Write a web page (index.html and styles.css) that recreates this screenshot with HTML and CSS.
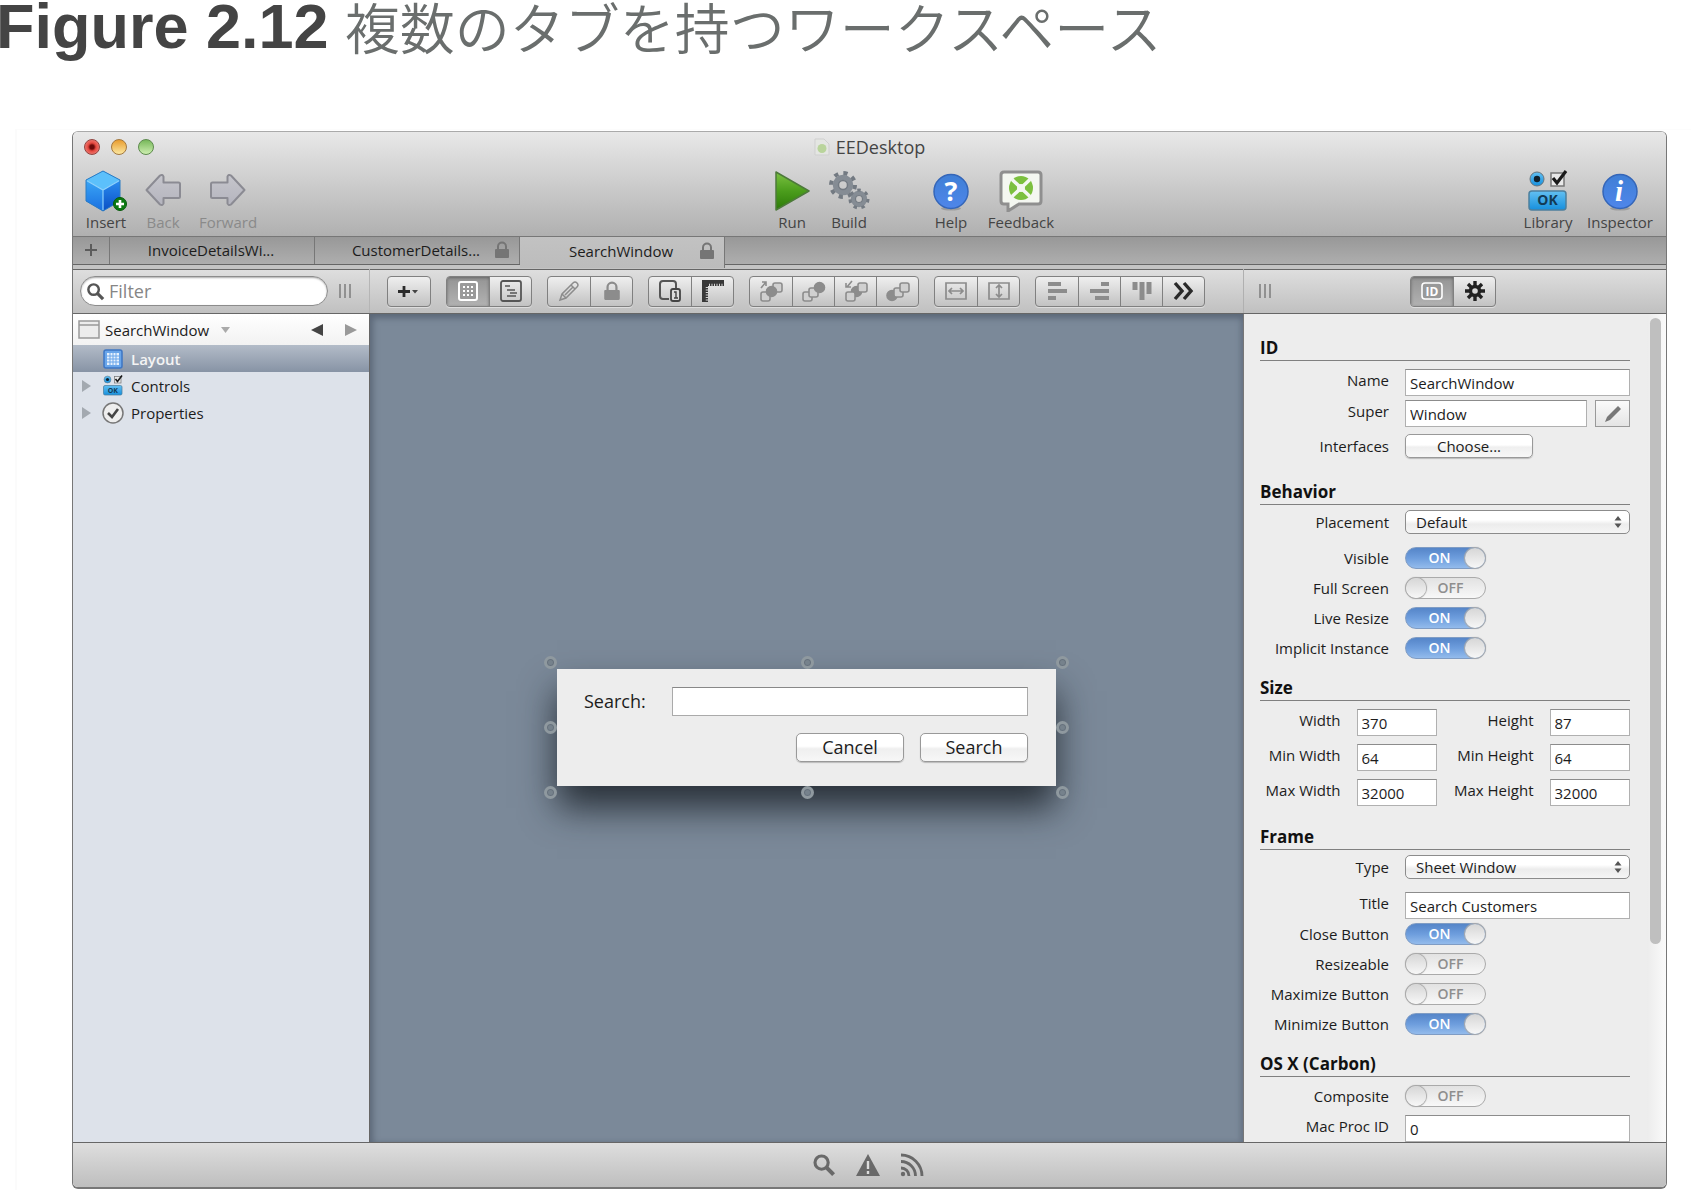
FILE: index.html
```html
<!DOCTYPE html>
<html lang="ja">
<head>
<meta charset="utf-8">
<meta name="viewport" content="width=device-width, initial-scale=1">
<title>Figure 2.12 複数のタブを持つワークスペース</title>
<link rel="stylesheet" href="styles.css">
</head>
<body>
<svg class="defs" width="0" height="0" aria-hidden="true">
  <defs>
    <linearGradient id="g-green" x1="0" y1="0" x2="0" y2="1"><stop offset="0" stop-color="#7cc242"/><stop offset=".5" stop-color="#4b9d1c"/><stop offset="1" stop-color="#2c7a08"/></linearGradient>
    <linearGradient id="g-blue" x1="0" y1="0" x2="0" y2="1"><stop offset="0" stop-color="#3f7fd6"/><stop offset="1" stop-color="#4f86ea"/></linearGradient>
    <linearGradient id="g-cyan" x1="0" y1="0" x2="0" y2="1"><stop offset="0" stop-color="#63c0f2"/><stop offset="1" stop-color="#168fdd"/></linearGradient>
    <linearGradient id="g-left" x1="0" y1="0" x2="0" y2="1"><stop offset="0" stop-color="#3aa6f6"/><stop offset="1" stop-color="#1a6fe0"/></linearGradient>
    <linearGradient id="g-right" x1="0" y1="0" x2="0" y2="1"><stop offset="0" stop-color="#2b8df0"/><stop offset="1" stop-color="#0a4fc4"/></linearGradient>
    <linearGradient id="g-arrow" x1="0" y1="0" x2="0" y2="1"><stop offset="0" stop-color="#c6c6cc"/><stop offset="1" stop-color="#b4b4be"/></linearGradient>
  </defs>
  <symbol id="lock" viewBox="0 0 16 18"><path d="M4 8V5.500a4 4 0 0 1 8 0V8" fill="none" stroke="currentColor" stroke-width="2"/><rect x="1" y="8" width="14" height="9" rx="1" fill="currentColor"/></symbol>
  <symbol id="lens" viewBox="0 0 20 20"><circle cx="8" cy="8" r="5.500" fill="none" stroke="currentColor" stroke-width="2.600"/><path d="M12 12l6 6" stroke="currentColor" stroke-width="3.400"/></symbol>
  <symbol id="controls" viewBox="0 0 40 42">
    <circle cx="9" cy="9" r="7" fill="url(#g-cyan)" stroke="#68747c"/><circle cx="9" cy="9" r="3.200" fill="#10202c"/>
    <rect x="23" y="3" width="13" height="13" fill="#e9e9e9" stroke="#777" stroke-width="1.500"/><path d="M25 8l4 5 9-12" fill="none" stroke="#191919" stroke-width="3.200"/>
    <rect x="1" y="21" width="37" height="19" rx="3" fill="url(#g-cyan)" stroke="#4d7f9d" stroke-width="1.500"/>
  </symbol>
</svg>

<h1 class="caption"><strong>Figure 2.12</strong><span>複数のタブを持つワークスペース</span></h1>

<main class="figure">
<div class="window">
  <header class="chrome">
    <div class="titlebar">
      <div class="lights">
        <button class="light light-close" aria-label="Close"></button>
        <button class="light light-min" aria-label="Minimize"></button>
        <button class="light light-zoom" aria-label="Zoom"></button>
      </div>
      <div class="title">
        <svg width="16" height="18" viewBox="0 0 16 18"><path d="M1 1h9l5 5v11H1z" fill="#e4e6e2" stroke="#cfcfcf"/><circle cx="8" cy="10.500" r="4.500" fill="#b9d49b"/></svg>
        <span>EEDesktop</span>
      </div>
    </div>
    <div class="tools">
      <button class="tool w42">
        <svg width="42" height="42" viewBox="0 0 42 42"><path d="M18 1L35 10V31L18 41L1 31V10z" fill="#1b6fd8"/><path d="M18 1L35 10L18 20L1 10z" fill="#5cc0fb"/><path d="M1 10L18 20V41L1 31z" fill="url(#g-left)"/><path d="M35 10L18 20V41L35 31z" fill="url(#g-right)"/><path d="M1.500 10.500L18 20L34.500 10.500M18 20V40" fill="none" stroke="#8fd2fb" stroke-width="1.200"/><path d="M18 1L35 10V31L18 41L1 31V10z" fill="none" stroke="#2b7cc4"/><circle cx="35" cy="34" r="6.500" fill="#0c7a12" stroke="#075a0b"/><path d="M35 30v8M31 34h8" stroke="#fff" stroke-width="2.600"/></svg>
        <span>Insert</span>
      </button>
      <button class="tool w36" disabled>
        <svg width="36" height="42" viewBox="0 0 36 42"><path d="M1.500 20L15 5.500Q17.500 4 18.500 6.500V12.500H33.500Q35 12.500 35 14V26.500Q35 28 33.500 28H18.500V33.500Q17.500 36 15 34.500z" fill="url(#g-arrow)" stroke="#8b8b93" stroke-width="2" stroke-linejoin="round"/></svg>
        <span>Back</span>
      </button>
      <button class="tool w58" disabled>
        <svg width="36" height="42" viewBox="0 0 36 42"><path d="M34.500 20L21 5.500Q18.500 4 17.500 6.500V12.500H2.500Q1 12.500 1 14V26.500Q1 28 2.500 28H17.500V33.500Q18.500 36 21 34.500z" fill="url(#g-arrow)" stroke="#8b8b93" stroke-width="2" stroke-linejoin="round"/></svg>
        <span>Forward</span>
      </button>
      <div class="spacer-a"></div>
      <button class="tool w36">
        <svg width="36" height="42" viewBox="0 0 36 42"><path d="M2 2L35 21L2 40z" fill="url(#g-green)" stroke="#4d7a3a" stroke-width="1.500" stroke-linejoin="round"/></svg>
        <span>Run</span>
      </button>
      <button class="tool w42">
        <svg width="42" height="42" viewBox="0 0 42 42"><g fill="none" stroke="#737a82"><circle cx="15" cy="15" r="7.500" stroke-width="5.500" stroke="#858c94"/><circle cx="15" cy="15" r="12" stroke-width="4" stroke-dasharray="4.200 5.225"/><circle cx="15" cy="15" r="4.500" stroke-width="1.500"/><circle cx="31" cy="29" r="6" stroke-width="4.500" stroke="#858c94"/><circle cx="31" cy="29" r="9" stroke-width="3" stroke-dasharray="3.500 4.578"/><circle cx="31" cy="29" r="3.500" stroke-width="1.200"/></g></svg>
        <span>Build</span>
      </button>
      <div class="spacer-gap"></div>
      <button class="tool w36">
        <svg width="36" height="42" viewBox="0 0 36 42"><ellipse cx="18" cy="38.500" rx="10" ry="2" fill="#9d9d9d"/><circle cx="18" cy="21.500" r="17" fill="url(#g-blue)" stroke="#3566b8" stroke-width="1.500"/><text x="18" y="31" text-anchor="middle" class="glyph-help">?</text></svg>
        <span>Help</span>
      </button>
      <button class="tool w68">
        <svg width="44" height="42" viewBox="0 0 44 42"><path d="M5 2H39Q42 2 42 5V31Q42 34 39 34H20L9 41V34H5Q2 34 2 31V5Q2 2 5 2z" fill="#f4f7f1" stroke="#8f8f8f" stroke-width="3"/><circle cx="22" cy="18" r="12" fill="#7cc03f"/><path d="M13 9.500L31 26.500M31 9.500L13 26.500" stroke="#f4f7f1" stroke-width="3.500"/><circle cx="22" cy="18" r="4" fill="#f4f7f1"/></svg>
        <span>Feedback</span>
      </button>
      <div class="spacer-b"></div>
      <div class="tool-pair">
      <button class="tool w50">
        <svg width="40" height="42" viewBox="0 0 40 42"><use href="#controls" width="40" height="42"/><text x="19.500" y="35" text-anchor="middle" class="ok-text">OK</text></svg>
        <span>Library</span>
      </button>
      <button class="tool w66">
        <svg width="36" height="42" viewBox="0 0 36 42"><ellipse cx="18" cy="38.500" rx="10" ry="2" fill="#9d9d9d"/><circle cx="18" cy="21.500" r="17" fill="url(#g-blue)" stroke="#3566b8" stroke-width="1.500"/><text x="17" y="31" text-anchor="middle" class="glyph-info">i</text></svg>
        <span>Inspector</span>
      </button>
      </div>
    </div>
  </header>

  <nav class="tabs" aria-label="Tabs">
    <button class="tab-add" aria-label="New tab"><svg width="12" height="12" viewBox="0 0 12 12"><path d="M6 0v12M0 6h12" stroke="#5c5c5c" stroke-width="2"/></svg></button>
    <button class="tab"><span>InvoiceDetailsWi...</span></button>
    <button class="tab"><span>CustomerDetails...</span><svg class="tab-lock" width="16" height="18"><use href="#lock"/></svg></button>
    <button class="tab tab-active"><span>SearchWindow</span><svg class="tab-lock" width="16" height="18"><use href="#lock"/></svg></button>
  </nav>

  <div class="bar">
    <div class="bar-side">
      <label class="filter"><svg width="19" height="19"><use href="#lens"/></svg><input type="search" placeholder="Filter" aria-label="Filter"></label>
      <svg class="grip" width="12" height="14" viewBox="0 0 12 14"><path d="M1 0v14M6 0v14M11 0v14" stroke="#777" stroke-width="1.400"/></svg>
    </div>
    <div class="bar-main">
      <div class="seg"><button aria-label="Add"><svg width="24" height="20" viewBox="0 0 24 20"><path d="M7 5v11M1 10.500h12" stroke="#2c2c2c" stroke-width="2.800"/><path d="M15 9h6l-3 3.500z" fill="#444"/></svg></button></div>
      <div class="seg">
        <button class="pressed" aria-label="Layout"><svg width="22" height="22" viewBox="0 0 22 22"><rect x="2" y="2" width="18" height="18" rx="2" fill="#9a9a9a" stroke="#fff" stroke-width="2"/><g fill="none" stroke="#fff" stroke-width="2" stroke-dasharray="2 2"><path d="M6 7h10M6 11h10M6 15h10"/></g></svg></button>
        <button aria-label="Code"><svg width="22" height="22" viewBox="0 0 22 22"><rect x="1" y="1" width="20" height="20" rx="2" fill="none" stroke="#555" stroke-width="1.800"/><path d="M5 6h5M7 10h8M10 13h7M7 16h9" stroke="#555" stroke-width="1.600"/></svg></button>
      </div>
      <div class="seg muted">
        <button aria-label="Edit"><svg width="22" height="22" viewBox="0 0 22 22"><path d="M2 20L4 14L15 3Q17 1 19 3Q21 5 19 7L8 18zM4 14l4 4M13 5l4 4M7 15l8-8" fill="none" stroke="currentColor" stroke-width="1.500"/></svg></button>
        <button aria-label="Lock"><svg width="18" height="20"><use href="#lock"/></svg></button>
      </div>
      <div class="seg">
        <button aria-label="Tab order"><svg width="24" height="22" viewBox="0 0 24 22"><path d="M11 19H5Q2 19 2 16V4Q2 1 5 1H15Q18 1 18 4V8" fill="none" stroke="#555" stroke-width="2"/><rect x="13" y="9" width="9" height="12" rx="2" fill="#ddd" stroke="#444" stroke-width="1.800"/><path d="M16 12h2v6M16 18h4" fill="none" stroke="#444" stroke-width="1.400"/></svg></button>
        <button aria-label="Rulers"><svg width="22" height="22" viewBox="0 0 22 22"><path d="M0 0H22V6H6V22H0z" fill="#383838"/><path d="M7 5h15M5 7v15" stroke="#d5d5d5" stroke-width="2.500" stroke-dasharray="1 1.500"/></svg></button>
      </div>
      <div class="seg muted">
        <button aria-label="Bring to front"><svg width="24" height="22" viewBox="0 0 24 22"><g fill="#d0d0d0" stroke="currentColor" stroke-width="1.600"><rect x="2" y="12" width="9" height="9" rx="2"/><rect x="14" y="3" width="9" height="9" rx="2"/><circle cx="12.500" cy="11.500" r="5" fill="currentColor"/><path d="M2 8l5-6M3 2h4v4" fill="none"/></g></svg></button>
        <button aria-label="Bring forward"><svg width="24" height="22" viewBox="0 0 24 22"><g fill="#d0d0d0" stroke="currentColor" stroke-width="1.600"><rect x="1" y="12" width="9" height="9" rx="2"/><rect x="7" y="8" width="9" height="9" rx="2"/><circle cx="17.500" cy="7.500" r="5" fill="currentColor"/></g></svg></button>
        <button aria-label="Send to back"><svg width="24" height="22" viewBox="0 0 24 22"><g fill="#d0d0d0" stroke="currentColor" stroke-width="1.600"><circle cx="12.500" cy="11.500" r="5" fill="currentColor"/><rect x="2" y="12" width="9" height="9" rx="2"/><rect x="14" y="3" width="9" height="9" rx="2"/><path d="M8 1l-5 6M2 3v4h5" fill="none"/></g></svg></button>
        <button aria-label="Send backward"><svg width="24" height="22" viewBox="0 0 24 22"><g fill="#d0d0d0" stroke="currentColor" stroke-width="1.600"><circle cx="6" cy="15.500" r="5" fill="currentColor"/><rect x="8" y="8" width="9" height="9" rx="2"/><rect x="14" y="3" width="9" height="9" rx="2"/></g></svg></button>
      </div>
      <div class="seg muted">
        <button aria-label="Fill width"><svg width="22" height="18" viewBox="0 0 22 18"><path d="M1 1h20v16H1zM4 9h14M7 6L4 9l3 3M15 6l3 3-3 3" fill="none" stroke="currentColor" stroke-width="1.700"/></svg></button>
        <button aria-label="Fill height"><svg width="22" height="18" viewBox="0 0 22 18"><path d="M1 1h20v16H1zM11 3v12M8 6l3-3 3 3M8 12l3 3 3-3" fill="none" stroke="currentColor" stroke-width="1.700"/></svg></button>
      </div>
      <div class="seg muted">
        <button aria-label="Align left"><svg width="20" height="20" viewBox="0 0 20 20"><path d="M1 3h13M1 10h19M1 17h8" stroke="currentColor" stroke-width="4"/></svg></button>
        <button aria-label="Align right"><svg width="20" height="20" viewBox="0 0 20 20"><path d="M11 3h8M0 10h19M5 17h14" stroke="currentColor" stroke-width="4"/></svg></button>
        <button aria-label="Align top"><svg width="20" height="20" viewBox="0 0 20 20"><path d="M3 1v8M10 1v18M17 1v12" stroke="currentColor" stroke-width="5"/></svg></button>
        <button aria-label="More"><svg width="22" height="20" viewBox="0 0 22 20"><path d="M2 2l7 8-7 8M11 2l7 8-7 8" fill="none" stroke="#2a2a2a" stroke-width="3.400"/></svg></button>
      </div>
    </div>
    <div class="bar-inspector">
      <svg class="grip" width="12" height="14" viewBox="0 0 12 14"><path d="M1 0v14M6 0v14M11 0v14" stroke="#777" stroke-width="1.400"/></svg>
      <div class="seg">
        <button class="pressed" aria-label="ID"><svg width="24" height="18" viewBox="0 0 24 18"><rect x="2" y="1" width="20" height="16" rx="3" fill="#999" stroke="#fff" stroke-width="1.600"/><text x="12" y="14" text-anchor="middle" class="id-text">ID</text></svg></button>
        <button aria-label="Settings"><svg width="22" height="22" viewBox="0 0 22 22"><g stroke="#222" stroke-width="3.400"><path d="M11 1v6M11 15v6M1 11h6M15 11h6M4 4l4 4M14 14l4 4M18 4l-4 4M8 14l-4 4"/><circle cx="11" cy="11" r="4.500" fill="none"/></g></svg></button>
      </div>
      <span></span>
    </div>
  </div>

  <div class="work">
    <aside class="sidebar">
      <div class="crumb">
        <svg width="22" height="20" viewBox="0 0 22 20"><rect x="1" y="1" width="20" height="17" fill="#ececec" stroke="#999" stroke-width="1.500"/><path d="M1 5h20" stroke="#999" stroke-width="1.500"/></svg>
        <button class="crumb-name">SearchWindow <svg width="9" height="6" viewBox="0 0 9 6"><path d="M0 0h9L4.500 6z" fill="#aaa"/></svg></button>
        <button class="step" aria-label="Previous"><svg width="12" height="12" viewBox="0 0 12 12"><path d="M12 0v12L0 6z" fill="#444"/></svg></button>
        <button class="step" aria-label="Next"><svg width="12" height="12" viewBox="0 0 12 12"><path d="M0 0v12L12 6z" fill="#999"/></svg></button>
      </div>
      <ul class="tree">
        <li class="selected"><span class="twist"></span><span class="node"><svg width="20" height="20" viewBox="0 0 20 20"><rect x="1" y="1" width="18" height="18" rx="2" fill="#6aa6ea" stroke="#3d76c4" stroke-width="1.500"/><rect x="4" y="4" width="12" height="12" fill="#e8f2fd"/><path d="M7 4v12M10 4v12M13 4v12M4 7h12M4 10h12M4 13h12" stroke="#6aa6ea"/></svg></span>Layout</li>
        <li><span class="twist"><svg width="9" height="12" viewBox="0 0 9 12"><path d="M0 0v12l9-6z" fill="#a3a9b0"/></svg></span><span class="node"><svg width="20" height="21" viewBox="0 0 40 42"><use href="#controls" width="40" height="42"/><text x="19.500" y="35" text-anchor="middle" class="ok-text">OK</text></svg></span>Controls</li>
        <li><span class="twist"><svg width="9" height="12" viewBox="0 0 9 12"><path d="M0 0v12l9-6z" fill="#a3a9b0"/></svg></span><span class="node"><svg width="22" height="22" viewBox="0 0 22 22"><circle cx="11" cy="11" r="10" fill="#eee" stroke="#777" stroke-width="1.500"/><path d="M6 11l4 4 6-8" fill="none" stroke="#444" stroke-width="2.600"/></svg></span>Properties</li>
      </ul>
    </aside>

    <section class="canvas">
      <form class="dialog">
        <label for="query">Search:</label>
        <input id="query" type="text">
        <div class="dialog-buttons">
          <button type="button" class="push">Cancel</button>
          <button type="button" class="push">Search</button>
        </div>
        <i class="handle top left"></i><i class="handle top mid"></i><i class="handle top right"></i>
        <i class="handle center left"></i><i class="handle center right"></i>
        <i class="handle bottom left"></i><i class="handle bottom mid"></i><i class="handle bottom right"></i>
      </form>
    </section>

    <aside class="inspector">
      <div class="props">
        <section class="group">
          <h2>ID</h2>
          <div class="row row-text"><label for="name">Name</label><input id="name" type="text" value="SearchWindow"></div>
          <div class="row row-text"><label for="super">Super</label><div class="pair"><input id="super" type="text" value="Window"><button class="edit" aria-label="Edit super"><svg width="18" height="18" viewBox="0 0 18 18"><path d="M1 17l2-5L14 1l3 3L6 15z" fill="#777"/></svg></button></div></div>
          <div class="row row-push"><span id="interfaces">Interfaces</span><button class="push choose" aria-describedby="interfaces">Choose...</button></div>
        </section>
        <section class="group group-tight">
          <h2>Behavior</h2>
          <div class="row row-select"><label for="placement">Placement</label><div class="popup"><select id="placement"><option>Default</option></select><svg width="8" height="12" viewBox="0 0 8 12"><path d="M0.500 4.500h7L4 0zM0.500 7.500h7L4 12z" fill="#555"/></svg></div></div>
          <div class="row row-switch"><label for="visible">Visible</label><span class="switch"><input id="visible" type="checkbox" checked><span class="state">ON</span><i class="knob"></i></span></div>
          <div class="row row-switch"><label for="full">Full Screen</label><span class="switch off"><input id="full" type="checkbox"><span class="state">OFF</span><i class="knob"></i></span></div>
          <div class="row row-switch"><label for="live">Live Resize</label><span class="switch"><input id="live" type="checkbox" checked><span class="state">ON</span><i class="knob"></i></span></div>
          <div class="row row-switch"><label for="implicit">Implicit Instance</label><span class="switch"><input id="implicit" type="checkbox" checked><span class="state">ON</span><i class="knob"></i></span></div>
        </section>
        <section class="group">
          <h2>Size</h2>
          <div class="sizes">
            <label for="w">Width</label><input id="w" type="text" value="370">
            <label for="h">Height</label><input id="h" type="text" value="87">
            <label for="minw">Min Width</label><input id="minw" type="text" value="64">
            <label for="minh">Min Height</label><input id="minh" type="text" value="64">
            <label for="maxw">Max Width</label><input id="maxw" type="text" value="32000">
            <label for="maxh">Max Height</label><input id="maxh" type="text" value="32000">
          </div>
        </section>
        <section class="group group-tight">
          <h2>Frame</h2>
          <div class="row row-select"><label for="type">Type</label><div class="popup"><select id="type"><option>Sheet Window</option></select><svg width="8" height="12" viewBox="0 0 8 12"><path d="M0.500 4.500h7L4 0zM0.500 7.500h7L4 12z" fill="#555"/></svg></div></div>
          <div class="row row-text"><label for="title">Title</label><input id="title" type="text" value="Search Customers"></div>
          <div class="row row-switch"><label for="close">Close Button</label><span class="switch"><input id="close" type="checkbox" checked><span class="state">ON</span><i class="knob"></i></span></div>
          <div class="row row-switch"><label for="resize">Resizeable</label><span class="switch off"><input id="resize" type="checkbox"><span class="state">OFF</span><i class="knob"></i></span></div>
          <div class="row row-switch"><label for="max">Maximize Button</label><span class="switch off"><input id="max" type="checkbox"><span class="state">OFF</span><i class="knob"></i></span></div>
          <div class="row row-switch"><label for="min">Minimize Button</label><span class="switch"><input id="min" type="checkbox" checked><span class="state">ON</span><i class="knob"></i></span></div>
        </section>
        <section class="group">
          <h2>OS X (Carbon)</h2>
          <div class="row row-switch"><label for="composite">Composite</label><span class="switch off"><input id="composite" type="checkbox"><span class="state">OFF</span><i class="knob"></i></span></div>
          <div class="row row-text"><label for="proc">Mac Proc ID</label><input id="proc" type="text" value="0"></div>
        </section>
      </div>
      <div class="track"><div class="thumb"></div></div>
    </aside>
  </div>

  <footer class="status">
    <button aria-label="Find"><svg width="24" height="24"><use href="#lens"/></svg></button>
    <button aria-label="Errors"><svg width="26" height="24" viewBox="0 0 26 24"><path d="M13 1L25 23H1z" fill="#696969"/><path d="M13 8v8M13 18v3" stroke="#ddd" stroke-width="2.400"/></svg></button>
    <button aria-label="Messages"><svg width="24" height="24" viewBox="0 0 24 24"><g fill="none" stroke="#696969" stroke-width="2.800"><path d="M1 2A21 21 0 0 1 22 23M1 8.500A14.500 14.500 0 0 1 15.500 23M1 15A8 8 0 0 1 9 23"/></g><circle cx="3" cy="21" r="2.200" fill="#696969"/></svg></button>
  </footer>
</div>
</main>
</body>
</html>
```

FILE: styles.css
```css
* { box-sizing: border-box; }

body {
  margin: 0;
  height: 100vh;
  min-width: 1400px;
  display: flex;
  flex-direction: column;
  overflow: hidden;
  background: #fff;
  color: #1c1c1c;
  font: 15px/20px "Open Sans", "Noto Sans", "Noto Sans CJK JP", sans-serif;
}

button, input, select { font: inherit; color: inherit; margin: 0; }
button { padding: 0; border: 0; background: none; }
svg { display: block; flex: none; }
.defs { position: absolute; }

.caption {
  display: flex;
  align-items: flex-start;
  gap: 16px;
  margin: 0 0 0 -4px;
  height: 129px;
  color: #6a6e6d;
  font: 350 55px/50px "Noto Sans CJK JP", sans-serif;
  white-space: nowrap;
}
.caption strong {
  color: #444;
  font: 700 63px/52px "Liberation Sans", Arial, sans-serif;
}

.figure {
  flex: 1;
  min-height: 0;
  display: flex;
  margin-left: 15px;
  padding: 1px 24px 1px 55px;
  border-top: 1px solid #fcfcfc;
  border-left: 2px solid #fbfbfb;
}

.window {
  flex: 1;
  min-width: 0;
  display: flex;
  flex-direction: column;
  border: 1px solid #777;
  border-top-color: #aaa;
  border-bottom: 2px solid #777;
  border-radius: 6px;
  overflow: hidden;
}

/* Title bar and main tools */
.chrome {
  background: linear-gradient(#e8e8e8, #cfcfcf 45%, #b0b0b0);
  border-bottom: 1px solid #777;
  color: #444;
}
.titlebar {
  display: grid;
  grid-template-columns: 1fr auto 1fr;
  align-items: center;
  height: 34px;
  padding: 0 11px 4px;
}
.lights { display: flex; gap: 11px; }
.light { width: 16px; height: 16px; border-radius: 50%; border: 1px solid #777; }
.light-close { background: radial-gradient(circle, #6b0a0a 0 2px, #e5483f 4px, #f39c94); border-color: #92433f; }
.light-min { background: linear-gradient(#e99c2e, #fbe7a0); border-color: #a3783e; }
.light-zoom { background: linear-gradient(#77b85a, #cdeeb0); border-color: #5c8a4c; }
.title { display: flex; align-items: center; gap: 6px; font-size: 18px; }

.tools {
  display: flex;
  gap: 18px;
  height: 70px;
  padding: 4px 13px 0 12px;
}
.tool {
  display: flex;
  flex-direction: column;
  align-items: center;
  height: 62px;
  white-space: nowrap;
}
.tool:disabled { color: #8a8a8a; }
.tool-pair { display: flex; gap: 14px; }
.w36 { width: 36px; }
.w42 { width: 42px; }
.w50 { width: 50px; }
.w58 { width: 58px; }
.w66 { width: 66px; }
.w68 { width: 68px; }
.spacer-a { flex: 520; }
.spacer-gap { width: 27px; }
.spacer-b { flex: 467; }
.ok-text { font: 700 14px "Open Sans", sans-serif; fill: #123a55; }
.id-text { font: 700 12px "Open Sans", sans-serif; fill: #fff; }
.glyph-help { font: 700 27px "Open Sans", sans-serif; fill: #fff; }
.glyph-info { font: italic 700 29px "Liberation Serif", serif; fill: #fff; }

/* Document tabs */
.tabs {
  display: flex;
  height: 28px;
  background: linear-gradient(#989898, #aeaeae);
  border-bottom: 1px solid #666;
}
.tab-add, .tab { border-right: 1px solid #777; padding-bottom: 2px; }
.tab-add { width: 37px; display: grid; place-items: center; }
.tab {
  width: 205px;
  display: grid;
  grid-template-columns: 30px 1fr 32px;
  align-items: center;
  white-space: nowrap;
}
.tab span { grid-column: 2; justify-self: center; }
.tab-lock { color: #757575; justify-self: end; margin-right: 9px; }
.tab-active {
  position: relative;
  height: 31px;
  padding-bottom: 4px;
  background: linear-gradient(#c2c2c2, #bcbcbc);
}

/* Editor bar */
.bar {
  display: flex;
  height: 49px;
  border-top: 4px solid #c4c4c4;
  background: linear-gradient(#666 0 1px, #dedede 1px, #c0c0c0);
  border-bottom: 1px solid #666;
}
.bar-side { width: 297px; display: flex; align-items: center; gap: 11px; padding-left: 7px; border-right: 1px solid #b5b5b5; }
.filter {
  width: 248px;
  height: 30px;
  display: flex;
  align-items: center;
  gap: 4px;
  padding: 0 10px 0 5px;
  border: 1px solid #8c8c8c;
  border-radius: 15px;
  background: #fff;
  color: #555;
  box-shadow: inset 0 1px 2px #aaa;
}
.filter input { flex: 1; min-width: 0; border: 0; padding: 0; background: none; font-size: 18px; outline: 0; }
.filter input::placeholder { color: #868686; opacity: 1; }
.bar-main { flex: 1; min-width: 0; display: flex; align-items: center; gap: 15px; padding-left: 17px; }
.bar-inspector {
  width: 423px;
  display: grid;
  grid-template-columns: 1fr auto 1fr;
  align-items: center;
  padding: 0 19px 0 15px;
  border-left: 1px solid #b0b0b0;
}
.seg {
  display: flex;
  height: 31px;
  border: 1px solid #808080;
  border-radius: 4px;
  background: linear-gradient(#efefef, #c2c2c2);
  box-shadow: 0 1px 0 #ddd;
  overflow: hidden;
}
.seg button { width: 42px; display: grid; place-items: center; }
.seg button + button { border-left: 1px solid #808080; }
.seg .pressed { background: linear-gradient(#949494, #b2b2b2); box-shadow: inset 0 1px 3px #666; }
.muted { color: #8c8c8c; }

/* Workspace */
.work { flex: 1; min-height: 0; display: flex; }

.sidebar { width: 297px; background: #dde2ea; border-right: 1px solid #666; }
.crumb {
  display: flex;
  align-items: center;
  height: 31px;
  padding: 0 12px 0 5px;
  gap: 5px;
  background: linear-gradient(#fff, #f2f2f2);
}
.crumb-name { display: flex; align-items: center; gap: 12px; margin-right: auto; }
.step + .step { margin-left: 17px; }
.tree { list-style: none; margin: 0; padding: 0; }
.tree li { display: flex; align-items: center; height: 27px; padding-left: 9px; }
.tree .selected {
  background: linear-gradient(#b3bcc8, #8793a5);
  color: #f4f4f4;
  font-weight: 600;
}
.twist { width: 19px; }
.node { width: 24px; display: grid; place-items: center; margin-right: 6px; }

.canvas {
  flex: 1;
  min-width: 0;
  display: grid;
  place-items: center;
  padding-bottom: 2px;
  background: #7b8999;
  box-shadow: inset 3px 4px 6px #5c6878, inset -3px 0 5px #6a7687;
}
.dialog {
  position: relative;
  display: grid;
  grid-template-columns: 72px 356px;
  column-gap: 16px;
  row-gap: 17px;
  align-items: center;
  padding: 18px 28px 24px 27px;
  background: #ededed;
  box-shadow: 0 22px 34px rgba(20, 26, 32, .8);
  font-size: 18px;
}
.dialog input { height: 29px; border: 1px solid #aaa; border-top-color: #888; background: #fff; }
.dialog-buttons { grid-column: 2; display: flex; justify-content: flex-end; gap: 16px; }
.push {
  height: 29px;
  width: 108px;
  border: 1px solid #999;
  border-radius: 5px;
  background: linear-gradient(#fff 45%, #efefef 55%, #f7f7f7);
  box-shadow: 0 1px 1px #bbb;
}
.handle {
  position: absolute;
  width: 13px;
  height: 13px;
  border: 3px solid #8f999f;
  border-radius: 50%;
  background: #76828c;
  box-shadow: inset 0 0 0 1px #66717d;
}
.top { top: -13px; }
.center { top: calc(50% - 6px); }
.bottom { bottom: -13px; }
.left { left: -13px; }
.mid { left: calc(50% - 6px); }
.right { right: -13px; }

/* Inspector */
.inspector {
  width: 423px;
  display: flex;
  justify-content: space-between;
  background: #ededed;
  border-left: 1px solid #777;
  overflow: hidden;
}
.props { flex: 1; padding: 24px 17px 0 16px; }
.track { width: 19px; padding: 4px 5px 0 3px; background: linear-gradient(90deg, #ececec, #fafafa); }
.thumb { height: 76%; border-radius: 6px; background: #bfbfbf; }

.group { padding-bottom: 21px; }
.group-tight { padding-bottom: 15px; }
.group h2 {
  margin: 0 0 4px;
  height: 23px;
  border-bottom: 1px solid #808080;
  color: #111;
  font-size: 17px;
  line-height: 20px;
}
.row {
  display: grid;
  grid-template-columns: 129px 1fr;
  column-gap: 16px;
  align-items: center;
}
.row > :first-child, .sizes label { text-align: right; white-space: nowrap; }
.row-text { padding-top: 4px; }
.row-text > label, .sizes label { padding-bottom: 6px; }
.row-push { padding: 7px 0 3px; }
.row-select { padding: 1px 0 9px; }
.row-switch { padding: 4px 0; }
.props input[type="text"] {
  width: 100%;
  min-width: 0;
  height: 27px;
  padding: 0 4px;
  border: 1px solid #b0b0b0;
  border-top-color: #8c8c8c;
  background: #fff;
}
.pair { display: flex; gap: 8px; }
.edit {
  flex: none;
  width: 35px;
  height: 27px;
  display: grid;
  place-items: center;
  border: 1px solid #999;
  background: linear-gradient(#fafafa, #e4e4e4);
}
.choose { width: 128px; height: 24px; }
.popup { position: relative; }
.popup select {
  appearance: none;
  display: block;
  width: 100%;
  height: 24px;
  padding: 0 24px 0 10px;
  border: 1px solid #8c8c8c;
  border-radius: 5px;
  background: linear-gradient(#fff 40%, #ececec 60%, #f5f5f5);
}
.popup svg { position: absolute; right: 8px; top: 6px; pointer-events: none; }

.switch {
  position: relative;
  display: flex;
  width: 81px;
  height: 22px;
  border: 1px solid #7f9cc4;
  border-radius: 11px;
  background: linear-gradient(#5585c8, #6d9ddd 50%, #93bbec);
  color: #fff;
  font-size: 14px;
  font-weight: 600;
}
.switch input { position: absolute; inset: 0; width: 100%; height: 100%; margin: 0; opacity: 0; }
.state { flex: 1; padding-left: 8px; text-align: center; }
.knob { width: 20px; height: 20px; border-radius: 50%; background: linear-gradient(#d6d6d6, #f7f7f7); box-shadow: 0 0 1px 1px #aaa; }
.off { flex-direction: row-reverse; border-color: #aaa; background: linear-gradient(#e2e2e2, #f8f8f8); color: #8e8e8e; }
.off .state { padding: 0 10px 0 0; }

.sizes {
  display: grid;
  grid-template-columns: repeat(4, minmax(0, 1fr));
  gap: 8px 16px;
  align-items: center;
  padding-top: 4px;
}
.sizes label { direction: rtl; }

/* Status bar */
.status {
  display: flex;
  justify-content: center;
  align-items: center;
  gap: 19px;
  height: 45px;
  padding-right: 3px;
  border-top: 1px solid #666;
  background: linear-gradient(#dedede, #bebebe);
  color: #696969;
}
```
